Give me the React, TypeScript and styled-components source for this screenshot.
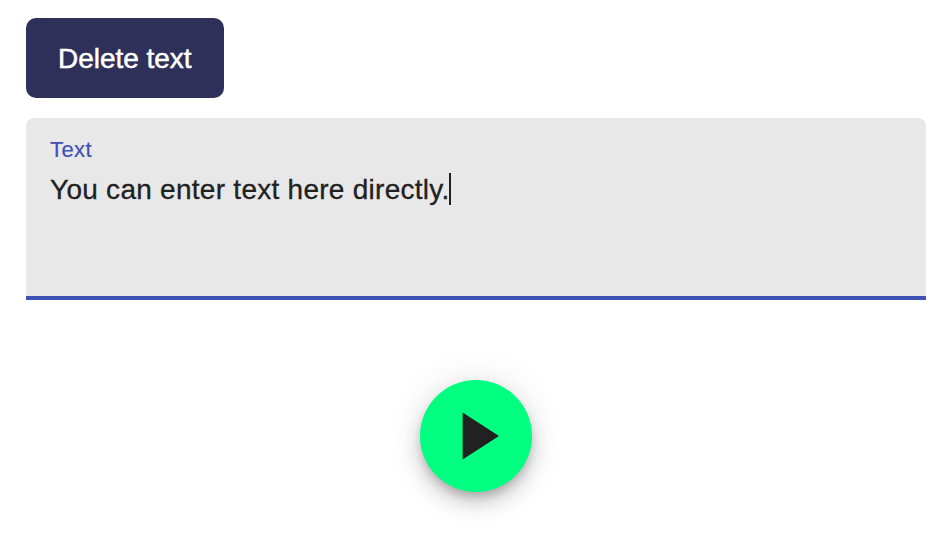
import React from "react";
import styled, { createGlobalStyle } from "styled-components";

const GlobalStyle = createGlobalStyle`
  * { box-sizing: border-box; }
  body {
    margin: 0;
    background: #fff;
    font-family: "Liberation Sans", Helvetica, Arial, sans-serif;
  }
`;

const Page = styled.main`
  display: flex;
  flex-direction: column;
  align-items: flex-start;
  height: 558px;
  padding: 18px 26px 0;
  overflow: hidden;
`;

const DeleteButton = styled.button`
  width: 198px;
  height: 80px;
  padding: 2px 0 0 32px;
  border: 0;
  border-radius: 10px;
  background: #2f3059;
  color: #fff;
  font: 400 28px/36px "Liberation Sans", Helvetica, Arial, sans-serif;
  letter-spacing: -0.03px;
  text-align: left;
  -webkit-text-stroke: 0.5px #fff;
  white-space: nowrap;
`;

const Field = styled.label`
  display: flex;
  flex-direction: column;
  width: 100%;
  height: 182px;
  margin-top: 20px;
  padding: 19px 24px 0;
  border-bottom: 4px solid #3f51b5;
  border-radius: 8px 8px 0 0;
  background: #e8e8e8;
`;

const FieldLabel = styled.span`
  color: #3f51b5;
  font-size: 22px;
  line-height: 26px;
  letter-spacing: 0.4px;
  -webkit-text-stroke: 0.2px #3f51b5;
`;

const FieldText = styled.span`
  display: flex;
  align-items: center;
  height: 36px;
  margin-top: 8px;
  color: #212121;
  font-size: 28px;
  line-height: 36px;
  letter-spacing: 0.27px;
  -webkit-text-stroke: 0.3px #212121;
  white-space: nowrap;
`;

const Value = styled.span`
  padding-top: 2px;
`;

const Caret = styled.span`
  width: 2px;
  height: 32px;
  margin-left: -0.7px;
  background: #212121;
`;

const PlayButton = styled.button`
  display: flex;
  align-items: center;
  justify-content: center;
  align-self: center;
  width: 112px;
  height: 112px;
  margin-top: 80px;
  padding: 0;
  border: 0;
  border-radius: 50%;
  background: #00ff80;
  box-shadow:
    0 6px 10px -2px rgba(0, 0, 0, 0.2),
    0 12px 20px rgba(0, 0, 0, 0.14),
    0 2px 36px rgba(0, 0, 0, 0.12);
`;

export default function App() {
  return (
    <>
      <GlobalStyle />
      <Page>
        <DeleteButton>Delete text</DeleteButton>
        <Field>
          <FieldLabel>Text</FieldLabel>
          <FieldText>
            <Value>You can enter text here directly.</Value>
            <Caret />
          </FieldText>
        </Field>
        <PlayButton aria-label="Play">
          <svg width="112" height="112" viewBox="0 0 112 112" fill="#212121">
            <path d="M42.6 32.6v46.8l36.4-23.4z" />
          </svg>
        </PlayButton>
      </Page>
    </>
  );
}
